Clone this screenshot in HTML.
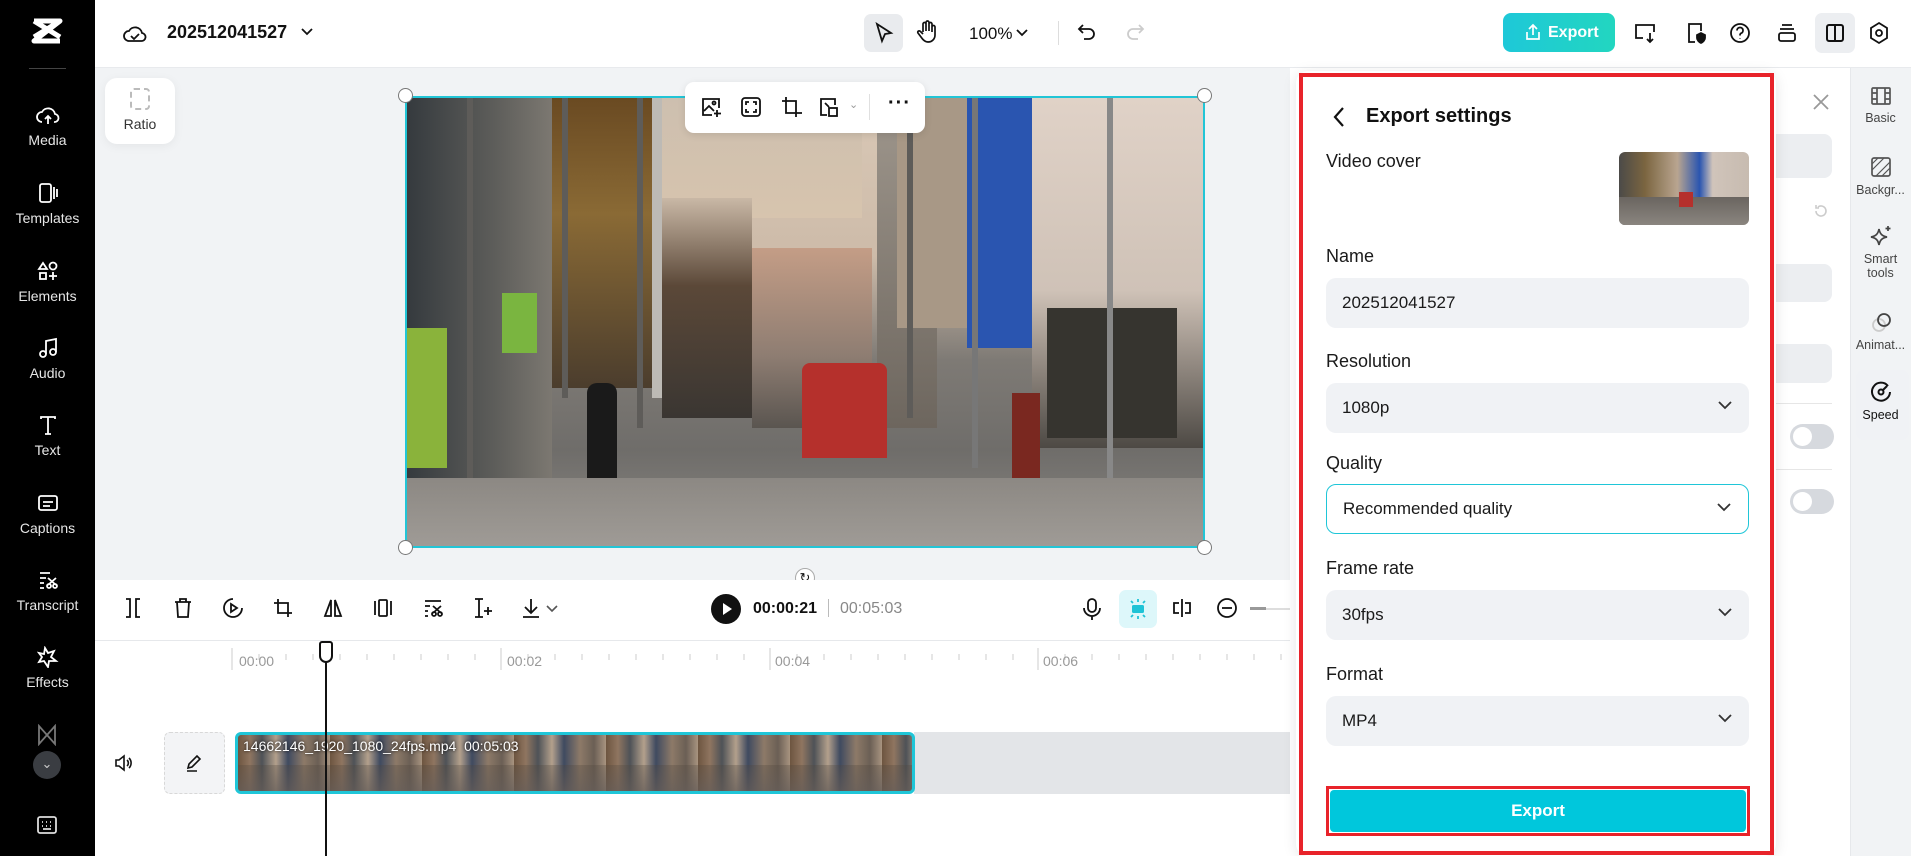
<!DOCTYPE html>
<html><head><meta charset="utf-8"><style>
*{box-sizing:border-box;margin:0;padding:0}
body{width:1911px;height:856px;overflow:hidden;position:relative;background:#f1f3f5;font-family:"Liberation Sans",sans-serif;color:#111}
.a{position:absolute}
.side{left:0;top:0;width:95px;height:856px;background:#000;color:#fff}
.si{position:absolute;left:0;width:95px;text-align:center;font-size:14px;color:#e6e6e6}
.si svg{display:block;margin:0 auto 6px}
.top{left:95px;top:0;width:1816px;height:68px;background:#fff;border-bottom:1px solid #e8eaed}
.lbl{font-size:18px;color:#1a1a1a}
.field{position:absolute;left:1326px;width:423px;height:50px;background:#f0f2f5;border-radius:10px;font-size:17px;padding:15px 16px;color:#1a1a1a}
.chev{position:absolute;right:16px;top:17px}
.ri{position:absolute;left:1850px;width:61px;text-align:center;font-size:12.5px;color:#444}
.ri svg{display:block;margin:0 auto 5px}
.pole{position:absolute;top:0;width:6px;background:#5e5c59}
</style></head><body>

<div class="a side">
 <svg class="a" style="left:30px;top:17px" width="34" height="32" viewBox="0 0 34 32"><path d="M4 4 L30 4 L4 24 L30 24 M4 4 L30 20 M30 4 L4 20" stroke="#fff" stroke-width="5" fill="none" stroke-linejoin="round"/></svg>
 <div class="a" style="left:29px;top:68px;width:37px;height:1px;background:#444"></div>
 <div class="si" style="top:104px"><svg width="24" height="22" viewBox="0 0 24 22" fill="none" stroke="#fff" stroke-width="1.8"><path d="M6 18a5 5 0 0 1 0-10 7 7 0 0 1 13 2 4 4 0 0 1-1 8"/><path d="M12 20v-8m-3 3 3-3 3 3"/></svg>Media</div>
 <div class="si" style="top:182px"><svg width="22" height="22" viewBox="0 0 22 22" fill="none" stroke="#fff" stroke-width="1.8"><rect x="3" y="2" width="11" height="18" rx="2"/><path d="M17 5v12M20 7v8"/></svg>Templates</div>
 <div class="si" style="top:260px"><svg width="22" height="22" viewBox="0 0 22 22" fill="none" stroke="#fff" stroke-width="1.8"><path d="M6 3l4 6H2z"/><circle cx="16" cy="6" r="3.5"/><rect x="3" y="13" width="6" height="6"/><path d="M16 12v8M12 16h8"/></svg>Elements</div>
 <div class="si" style="top:337px"><svg width="22" height="22" viewBox="0 0 22 22" fill="none" stroke="#fff" stroke-width="1.8"><circle cx="6" cy="17" r="3"/><circle cx="16" cy="15" r="3"/><path d="M9 17V4l10-2v13"/></svg>Audio</div>
 <div class="si" style="top:414px"><svg width="22" height="22" viewBox="0 0 22 22" fill="none" stroke="#fff" stroke-width="1.8"><path d="M4 5V3h14v2M11 3v17M8 20h6"/></svg>Text</div>
 <div class="si" style="top:492px"><svg width="22" height="22" viewBox="0 0 22 22" fill="none" stroke="#fff" stroke-width="1.8"><rect x="2" y="4" width="18" height="14" rx="2"/><path d="M6 10h10M6 14h7"/></svg>Captions</div>
 <div class="si" style="top:569px"><svg width="22" height="22" viewBox="0 0 22 22" fill="none" stroke="#fff" stroke-width="1.8"><path d="M3 4h10M3 9h6M3 14h4M3 19h4"/><circle cx="12" cy="17" r="2"/><circle cx="18" cy="17" r="2"/><path d="M11 9l8 7M19 9l-8 7"/></svg>Transcript</div>
 <div class="si" style="top:646px"><svg width="22" height="22" viewBox="0 0 22 22" fill="none" stroke="#fff" stroke-width="1.8"><path d="M8 2l3 5 6-2-3 6 5 4h-7l-1 6-4-6-5 1 3-5-3-4 5 1z"/></svg>Effects</div>
 <svg class="a" style="left:37px;top:724px" width="20" height="22" viewBox="0 0 20 22" fill="none" stroke="#777" stroke-width="1.8"><path d="M2 2v18l16-18v18z"/></svg>
 <div class="a" style="left:33px;top:751px;width:28px;height:28px;border-radius:50%;background:#3a3d42;color:#ccc;font-size:13px;text-align:center;line-height:26px">⌄</div>
 <svg class="a" style="left:36px;top:815px" width="22" height="20" viewBox="0 0 22 20" fill="none" stroke="#ddd" stroke-width="1.8"><rect x="2" y="2" width="18" height="16" rx="2"/><path d="M6 7h1M10 7h1M14 7h1M6 11h1M10 11h1M14 11h1M7 14h8"/></svg>
</div>

<div class="a top"></div>
<svg class="a" style="left:123px;top:22px" width="24" height="22" viewBox="0 0 24 22" fill="none" stroke="#111" stroke-width="1.8"><path d="M6 19a5 5 0 0 1 0-10 7 7 0 0 1 13 2 4 4 0 0 1-1 8z"/><path d="M8 14l3 3 5-5"/></svg>
<div class="a" style="left:167px;top:22px;font-size:18px;font-weight:bold">202512041527</div>
<svg class="a" style="left:300px;top:27px" width="14" height="10" viewBox="0 0 14 10"><path d="M2 2l5 5 5-5" stroke="#111" stroke-width="1.8" fill="none"/></svg>
<div class="a" style="left:864px;top:14px;width:39px;height:38px;background:#e9ebee;border-radius:7px"></div>
<svg class="a" style="left:874px;top:22px" width="20" height="22" viewBox="0 0 20 22" fill="none" stroke="#111" stroke-width="1.8"><path d="M3 2l14 9-6 1-3 7z"/></svg>
<svg class="a" style="left:916px;top:20px" width="22" height="24" viewBox="0 0 22 24" fill="none" stroke="#111" stroke-width="1.7"><path d="M7 12V4a1.5 1.5 0 0 1 3 0v7V2.5a1.5 1.5 0 0 1 3 0V11V4a1.5 1.5 0 0 1 3 0v8V7a1.5 1.5 0 0 1 3 0v8c0 4-3 7-7 7-3 0-5-2-7-5l-3-4c-1-1.5 1-3 2.5-1.5L7 14"/></svg>
<div class="a" style="left:969px;top:24px;font-size:17px">100%</div>
<svg class="a" style="left:1016px;top:28px" width="12" height="9" viewBox="0 0 12 9"><path d="M1 2l5 5 5-5" stroke="#111" stroke-width="1.8" fill="none"/></svg>
<div class="a" style="left:1058px;top:21px;width:1px;height:24px;background:#ddd"></div>
<svg class="a" style="left:1077px;top:22px" width="20" height="20" viewBox="0 0 20 20" fill="none" stroke="#111" stroke-width="1.8"><path d="M6 3L2 7l4 4M2 7h10a5 5 0 0 1 0 10H7"/></svg>
<svg class="a" style="left:1125px;top:22px" width="20" height="20" viewBox="0 0 20 20" fill="none" stroke="#ccc" stroke-width="1.8"><path d="M14 3l4 4-4 4M18 7H8a5 5 0 0 0 0 10h5"/></svg>
<div class="a" style="left:1503px;top:13px;width:112px;height:39px;border-radius:8px;background:linear-gradient(90deg,#1ec8d8,#22d6c0);color:#fff;font-weight:bold;font-size:16px;line-height:39px;padding-left:45px">Export</div>
<svg class="a" style="left:1525px;top:23px" width="16" height="18" viewBox="0 0 16 18" fill="none" stroke="#fff" stroke-width="1.7"><path d="M8 12V2M4 6l4-4 4 4M2 9v7h12V9"/></svg>
<svg class="a" style="left:1633px;top:22px" width="24" height="22" viewBox="0 0 24 22" fill="none" stroke="#111" stroke-width="1.8"><path d="M10 16H3V3h18v7M17 11v9M14 17l3 3 3-3"/></svg>
<svg class="a" style="left:1685px;top:21px" width="22" height="24" viewBox="0 0 22 24" fill="none" stroke="#111" stroke-width="1.8"><path d="M10 21H4V3h12v7"/><path d="M16 12l4 2v3c0 2-2 4-4 5-2-1-4-3-4-5v-3z" fill="#111"/></svg>
<svg class="a" style="left:1729px;top:22px" width="22" height="22" viewBox="0 0 22 22" fill="none" stroke="#111" stroke-width="1.8"><circle cx="11" cy="11" r="9"/><path d="M8 8.5a3 3 0 1 1 4 2.8c-1 .4-1 1-1 2.2M11 16v.5"/></svg>
<svg class="a" style="left:1776px;top:22px" width="22" height="22" viewBox="0 0 22 22" fill="none" stroke="#111" stroke-width="1.8"><path d="M6 3h10M4 7h14"/><rect x="3" y="11" width="16" height="8" rx="2"/></svg>
<div class="a" style="left:1815px;top:13px;width:40px;height:40px;background:#eceef1;border-radius:7px"></div>
<svg class="a" style="left:1824px;top:22px" width="22" height="22" viewBox="0 0 22 22" fill="none" stroke="#111" stroke-width="2"><rect x="3" y="3" width="16" height="16" rx="2"/><path d="M11 3v16"/></svg>
<svg class="a" style="left:1868px;top:21px" width="22" height="24" viewBox="0 0 22 24" fill="none" stroke="#111" stroke-width="1.8"><path d="M11 2l8 5v10l-8 5-8-5V7z"/><circle cx="11" cy="12" r="3"/></svg>

<div class="a" style="left:105px;top:78px;width:70px;height:66px;background:#fff;border-radius:12px;box-shadow:0 2px 10px rgba(0,0,0,.06);text-align:center;font-size:14px;color:#333;padding-top:10px">
 <div style="width:20px;height:22px;border:2px dashed #bbb;border-radius:4px;margin:0 auto 6px"></div>Ratio</div>

<!-- video -->
<div class="a" style="left:405px;top:96px;width:800px;height:452px;border:2px solid #22c5d6;overflow:hidden;background:#8a8379">
 <div class="a" style="left:0;top:0;width:800px;height:452px;background:linear-gradient(180deg,#d9c8b6 0%,#cdbba9 35%,#7e7a75 58%,#6f6d6a 78%,#8a8783 100%)"></div>
 <div class="a" style="left:0;top:0;width:145px;height:390px;background:linear-gradient(90deg,#353a3e,#5d5d5a 60%,#7c7871)"></div>
 <div class="a" style="left:0;top:230px;width:40px;height:140px;background:#8ab33b"></div>
 <div class="a" style="left:95px;top:195px;width:35px;height:60px;background:#7ab540"></div>
 <div class="a" style="left:145px;top:0;width:100px;height:290px;background:linear-gradient(180deg,#6a4a22,#8a6a35 40%,#4b3d2d)"></div>
 <div class="a" style="left:245px;top:0;width:30px;height:300px;background:#bdbab5"></div>
 <div class="a" style="left:255px;top:0;width:200px;height:120px;background:linear-gradient(180deg,#cdbfaf,#d7c4ae)"></div>
 <div class="a" style="left:255px;top:100px;width:90px;height:220px;background:linear-gradient(180deg,#c9b8a6,#5b4838 40%,#3a3632)"></div>
 <div class="a" style="left:345px;top:150px;width:120px;height:180px;background:linear-gradient(180deg,#c49d86,#8e7d72 60%,#5a5550)"></div>
 <div class="a" style="left:470px;top:0;width:60px;height:330px;background:linear-gradient(180deg,#9f978d,#6d665e)"></div>
 <div class="a" style="left:490px;top:0;width:90px;height:230px;background:#a89886"></div>
 <div class="a" style="left:560px;top:0;width:65px;height:250px;background:#2a55b0"></div>
 <div class="a" style="left:625px;top:0;width:175px;height:350px;background:linear-gradient(180deg,#e0d2c7,#cfc2b7 55%,#4d4944)"></div>
 <div class="a" style="left:640px;top:210px;width:130px;height:130px;background:#36342f"></div>
 <div class="pole" style="left:60px;height:420px"></div>
 <div class="pole" style="left:155px;height:300px"></div>
 <div class="pole" style="left:230px;height:330px"></div>
 <div class="pole" style="left:500px;height:320px"></div>
 <div class="pole" style="left:565px;height:370px;background:#777"></div>
 <div class="pole" style="left:700px;height:380px;background:#888"></div>
 <div class="a" style="left:395px;top:265px;width:85px;height:95px;background:#b5302c;border-radius:8px 8px 0 0"></div>
 <div class="a" style="left:180px;top:285px;width:30px;height:120px;background:#1a1a1a;border-radius:10px 10px 0 0"></div>
 <div class="a" style="left:605px;top:295px;width:28px;height:90px;background:#7a2820"></div>
 <div class="a" style="left:0;top:380px;width:800px;height:72px;background:linear-gradient(180deg,#8c8883,#a09c97)"></div>
</div>
<div class="a" style="left:398px;top:88px;width:15px;height:15px;border-radius:50%;background:#fff;border:1px solid #777"></div>
<div class="a" style="left:1197px;top:88px;width:15px;height:15px;border-radius:50%;background:#fff;border:1px solid #777"></div>
<div class="a" style="left:398px;top:540px;width:15px;height:15px;border-radius:50%;background:#fff;border:1px solid #777"></div>
<div class="a" style="left:1197px;top:540px;width:15px;height:15px;border-radius:50%;background:#fff;border:1px solid #777"></div>
<div class="a" style="left:795px;top:568px;width:20px;height:20px;border-radius:50%;background:#fff;border:1px solid #aaa;font-size:13px;text-align:center;line-height:17px">↻</div>

<div class="a" style="left:685px;top:82px;width:240px;height:51px;background:#fff;border-radius:9px;box-shadow:0 2px 8px rgba(0,0,0,.1)"></div>
<svg class="a" style="left:700px;top:96px" width="22" height="22" viewBox="0 0 22 22" fill="none" stroke="#111" stroke-width="1.8"><path d="M12 19H3V3h16v9"/><path d="M4 15l5-5 5 5"/><circle cx="14" cy="7" r="1.5"/><path d="M17 14v7M14 17.5h7"/></svg>
<svg class="a" style="left:740px;top:96px" width="22" height="22" viewBox="0 0 22 22" fill="none" stroke="#111" stroke-width="1.8"><rect x="2" y="2" width="18" height="18" rx="3"/><path d="M6 9V6h3M13 6h3v3M16 13v3h-3M9 16H6v-3"/></svg>
<svg class="a" style="left:780px;top:95px" width="22" height="24" viewBox="0 0 22 24" fill="none" stroke="#111" stroke-width="1.8"><path d="M6 2v16h16M2 6h14v16"/></svg>
<svg class="a" style="left:818px;top:96px" width="22" height="22" viewBox="0 0 22 22" fill="none" stroke="#111" stroke-width="1.8"><path d="M9 19H3V3h14v6"/><rect x="11" y="12" width="8" height="8"/><path d="M7 7l4 4"/></svg>
<div class="a" style="left:849px;top:98px;font-size:11px;color:#999">⌄</div>
<div class="a" style="left:869px;top:94px;width:1px;height:26px;background:#e0e0e0"></div>
<div class="a" style="left:888px;top:92px;font-size:20px;font-weight:bold;letter-spacing:1px">···</div>

<div class="a" style="left:95px;top:580px;width:1205px;height:276px;background:#fff"></div>
<div class="a" style="left:95px;top:640px;width:1205px;height:1px;background:#e6e8eb"></div>
<svg class="a" style="left:122px;top:597px" width="22" height="22" viewBox="0 0 22 22" fill="none" stroke="#111" stroke-width="1.8"><path d="M4 2h4v18H4M18 2h-4v18h4"/></svg>
<svg class="a" style="left:172px;top:597px" width="22" height="22" viewBox="0 0 22 22" fill="none" stroke="#111" stroke-width="1.8"><path d="M3 5h16M8 5V2h6v3M5 5l1 15h10l1-15"/></svg>
<svg class="a" style="left:222px;top:597px" width="22" height="22" viewBox="0 0 22 22" fill="none" stroke="#111" stroke-width="1.8"><path d="M11 2a9 9 0 1 0 9 9"/><path d="M9 7l6 4-6 4z"/></svg>
<svg class="a" style="left:272px;top:597px" width="22" height="22" viewBox="0 0 22 22" fill="none" stroke="#111" stroke-width="1.8"><path d="M6 2v14h14M2 6h14v14"/></svg>
<svg class="a" style="left:322px;top:597px" width="22" height="22" viewBox="0 0 22 22" fill="none" stroke="#111" stroke-width="1.8"><path d="M9 3L3 19h6zM13 3l6 16h-6z"/></svg>
<svg class="a" style="left:372px;top:597px" width="22" height="22" viewBox="0 0 22 22" fill="none" stroke="#111" stroke-width="1.8"><rect x="7" y="3" width="8" height="16" rx="1"/><path d="M3 4v14M19 4v14"/></svg>
<svg class="a" style="left:422px;top:597px" width="22" height="22" viewBox="0 0 22 22" fill="none" stroke="#111" stroke-width="1.8"><path d="M3 4h16M3 9h5M3 14h3M3 19h3"/><circle cx="12" cy="17" r="2"/><circle cx="18" cy="17" r="2"/><path d="M11 9l8 7M19 9l-8 7"/></svg>
<svg class="a" style="left:472px;top:597px" width="22" height="22" viewBox="0 0 22 22" fill="none" stroke="#111" stroke-width="1.8"><path d="M3 2h4v18H3M11 2h-4M11 20H7M16 10v8M12 14h8"/></svg>
<svg class="a" style="left:520px;top:597px" width="22" height="22" viewBox="0 0 22 22" fill="none" stroke="#111" stroke-width="1.8"><path d="M11 2v13M5 10l6 6 6-6M3 20h16"/></svg>
<svg class="a" style="left:546px;top:604px" width="12" height="9" viewBox="0 0 12 9"><path d="M1 2l5 5 5-5" stroke="#555" stroke-width="1.6" fill="none"/></svg>
<div class="a" style="left:711px;top:594px;width:30px;height:30px;border-radius:50%;background:#111"></div>
<svg class="a" style="left:722px;top:602px" width="11" height="14" viewBox="0 0 11 14"><path d="M1 1l9 6-9 6z" fill="#fff"/></svg>
<div class="a" style="left:753px;top:600px;font-size:16px;font-weight:bold">00:00:21</div>
<div class="a" style="left:828px;top:599px;width:1px;height:18px;background:#bbb"></div>
<div class="a" style="left:840px;top:600px;font-size:16px;color:#888">00:05:03</div>
<svg class="a" style="left:1081px;top:597px" width="22" height="24" viewBox="0 0 22 24" fill="none" stroke="#111" stroke-width="1.8"><rect x="7" y="2" width="8" height="13" rx="4"/><path d="M3 11a8 8 0 0 0 16 0M11 19v4"/></svg>
<div class="a" style="left:1119px;top:590px;width:38px;height:38px;background:#ddf7fa;border-radius:7px"></div>
<svg class="a" style="left:1126px;top:597px" width="24" height="24" viewBox="0 0 24 24"><rect x="6" y="8" width="12" height="8" rx="1.5" fill="#1fc3d6"/><path d="M12 2v3M12 19v3M5 4l2 2M19 4l-2 2M5 20l2-2M19 20l-2-2" stroke="#1fc3d6" stroke-width="1.8"/></svg>
<svg class="a" style="left:1171px;top:597px" width="22" height="22" viewBox="0 0 22 22" fill="none" stroke="#111" stroke-width="1.8"><path d="M11 2v18M8 6H3v10h5M14 6h5v10h-5"/></svg>
<svg class="a" style="left:1216px;top:597px" width="22" height="22" viewBox="0 0 22 22" fill="none" stroke="#111" stroke-width="1.8"><circle cx="11" cy="11" r="9"/><path d="M6 11h10"/></svg>
<div class="a" style="left:1250px;top:608px;width:50px;height:2px;background:#ddd"></div>
<div class="a" style="left:1250px;top:607px;width:16px;height:3px;background:#999"></div>

<svg class="a" style="left:95px;top:640px" width="1205" height="30"><g stroke="#ccc" stroke-width="1">
<path d="M137 8v22M406 8v22M675 8v22M943 8v22"/>
<path d="M164 14v6M191 14v6M218 14v6M245 14v6M272 14v6M299 14v6M326 14v6M353 14v6M380 14v6M433 14v6M460 14v6M487 14v6M514 14v6M541 14v6M568 14v6M595 14v6M622 14v6M649 14v6M702 14v6M729 14v6M756 14v6M783 14v6M810 14v6M837 14v6M864 14v6M891 14v6M918 14v6M970 14v6M997 14v6M1024 14v6M1051 14v6M1078 14v6M1105 14v6M1132 14v6M1159 14v6M1186 14v6"/></g></svg>
<div class="a" style="left:239px;top:653px;font-size:14px;color:#999">00:00</div>
<div class="a" style="left:507px;top:653px;font-size:14px;color:#999">00:02</div>
<div class="a" style="left:775px;top:653px;font-size:14px;color:#999">00:04</div>
<div class="a" style="left:1043px;top:653px;font-size:14px;color:#999">00:06</div>

<svg class="a" style="left:113px;top:753px" width="20" height="20" viewBox="0 0 20 20" fill="none" stroke="#111" stroke-width="1.6"><path d="M3 7h3l5-4v14l-5-4H3z"/><path d="M14 7a4 4 0 0 1 0 6M16 5a7 7 0 0 1 0 10"/></svg>
<div class="a" style="left:164px;top:732px;width:61px;height:62px;background:#f3f4f6;border:1px dashed #d8d8d8;border-radius:6px"></div>
<svg class="a" style="left:184px;top:753px" width="20" height="20" viewBox="0 0 20 20" fill="none" stroke="#111" stroke-width="1.6"><path d="M4 15l1-4 8-8 3 3-8 8zM3 18h10"/></svg>
<div class="a" style="left:914px;top:732px;width:386px;height:62px;background:#e3e5e8"></div>
<div class="a" style="left:235px;top:732px;width:680px;height:62px;border:3px solid #1fc6d8;border-radius:6px;background:repeating-linear-gradient(90deg,#6d5540 0px,#8f7560 12px,#4e5257 24px,#b3a08c 38px,#3f4a60 50px,#8d7a68 66px,#6b5f55 80px,#a89480 92px);overflow:hidden">
 <div class="a" style="left:0;top:30px;width:680px;height:30px;background:linear-gradient(180deg,rgba(80,70,60,.3),rgba(100,92,88,.8))"></div>
 <div class="a" style="left:5px;top:3px;font-size:14px;color:#fff;text-shadow:0 0 3px #000">14662146_1920_1080_24fps.mp4 &nbsp;00:05:03</div>
</div>
<div class="a" style="left:325px;top:642px;width:2px;height:214px;background:#111"></div>
<div class="a" style="left:319px;top:641px;width:14px;height:22px;background:#fff;border:2px solid #111;border-radius:3px 3px 7px 7px"></div>

<div class="a" style="left:1290px;top:68px;width:560px;height:788px;background:#fff"></div>
<div class="a" style="left:1850px;top:68px;width:1px;height:788px;background:#e6e8eb"></div>
<svg class="a" style="left:1812px;top:93px" width="18" height="18" viewBox="0 0 18 18"><path d="M2 2l14 14M16 2L2 16" stroke="#999" stroke-width="1.8"/></svg>
<div class="a" style="left:1760px;top:134px;width:72px;height:44px;background:#eceef1;border-radius:8px"></div>
<svg class="a" style="left:1813px;top:203px" width="16" height="16" viewBox="0 0 16 16" fill="none" stroke="#ccc" stroke-width="1.6"><path d="M3 8a5 5 0 1 0 2-4M3 2v3h3"/></svg>
<div class="a" style="left:1760px;top:264px;width:72px;height:38px;background:#eceef1;border-radius:8px"></div>
<div class="a" style="left:1760px;top:344px;width:72px;height:39px;background:#eceef1;border-radius:8px"></div>
<div class="a" style="left:1760px;top:403px;width:72px;height:1px;background:#e6e6e6"></div>
<div class="a" style="left:1760px;top:469px;width:72px;height:1px;background:#e6e6e6"></div>
<div class="a" style="left:1790px;top:424px;width:44px;height:25px;border-radius:13px;background:#d6d9de"><div style="width:19px;height:19px;border-radius:50%;background:#fff;margin:3px"></div></div>
<div class="a" style="left:1790px;top:489px;width:44px;height:25px;border-radius:13px;background:#d6d9de"><div style="width:19px;height:19px;border-radius:50%;background:#fff;margin:3px"></div></div>

<div class="ri" style="top:86px"><svg width="22" height="20" viewBox="0 0 22 20" fill="none" stroke="#555" stroke-width="1.7"><rect x="2" y="2" width="18" height="16" rx="1"/><path d="M7 2v16M15 2v16M2 7h5M2 13h5M15 7h5M15 13h5"/></svg>Basic</div>
<div class="ri" style="top:156px"><svg width="22" height="22" viewBox="0 0 22 22" fill="none" stroke="#555" stroke-width="1.7"><rect x="2" y="2" width="18" height="18" rx="2"/><path d="M2 14L14 2M6 20L20 6M2 8l6-6M12 20l8-8" stroke-width="1.2"/></svg>Backgr...</div>
<div class="ri" style="top:225px"><svg width="22" height="22" viewBox="0 0 22 22" fill="none" stroke="#444" stroke-width="1.7"><path d="M9 4c1 5 3 7 8 8-5 1-7 3-8 8-1-5-3-7-8-8 5-1 7-3 8-8zM18 1v5M15.5 3.5h5"/></svg>Smart<br>tools</div>
<div class="ri" style="top:311px"><svg width="22" height="22" viewBox="0 0 22 22" fill="none" stroke-width="1.8"><circle cx="9" cy="14" r="6" stroke="#ccc"/><circle cx="14" cy="9" r="6" stroke="#444"/></svg>Animat...</div>
<div class="a" style="left:1856px;top:370px;width:53px;height:70px;background:#f0f2f5;border-radius:8px"></div>
<div class="ri" style="top:381px;color:#111"><svg width="22" height="22" viewBox="0 0 22 22" fill="none" stroke="#111" stroke-width="2"><path d="M18 5a9 9 0 1 0 2 6"/><circle cx="11" cy="11" r="2.5"/><path d="M12.5 9.5L17 5"/></svg>Speed</div>

<div class="a" style="left:1296px;top:71px;width:480px;height:785px;background:#fff;border-radius:12px;box-shadow:0 2px 14px rgba(0,0,0,.1)"></div>
<div class="a" style="left:1299px;top:73px;width:475px;height:782px;border:4px solid #e8232a"></div>
<svg class="a" style="left:1332px;top:106px" width="14" height="22" viewBox="0 0 14 22"><path d="M11 2L3 11l8 9" stroke="#111" stroke-width="2.2" fill="none"/></svg>
<div class="a" style="left:1366px;top:105px;font-size:20px;font-weight:bold">Export settings</div>
<div class="a lbl" style="left:1326px;top:151px">Video cover</div>
<div class="a" style="left:1619px;top:152px;width:130px;height:73px;border-radius:6px;overflow:hidden;background:linear-gradient(90deg,#4b4a48 0%,#7b6540 20%,#b9a590 45%,#2a55b0 62%,#d0c4ba 72%,#c7bbb0 100%)">
 <div class="a" style="left:0;top:45px;width:130px;height:28px;background:linear-gradient(180deg,#6a6560,#8a857f)"></div>
 <div class="a" style="left:60px;top:40px;width:14px;height:15px;background:#b5302c"></div></div>
<div class="a lbl" style="left:1326px;top:246px">Name</div>
<div class="field" style="top:278px;height:50px">202512041527</div>
<div class="a lbl" style="left:1326px;top:351px">Resolution</div>
<div class="field" style="top:383px">1080p<svg class="chev" width="16" height="10" viewBox="0 0 16 10"><path d="M2 2l6 6 6-6" stroke="#333" stroke-width="1.8" fill="none"/></svg></div>
<div class="a lbl" style="left:1326px;top:453px">Quality</div>
<div class="field" style="top:484px;background:#fff;border:1.5px solid #1fc6d8;padding-top:14px">Recommended quality<svg class="chev" width="16" height="10" viewBox="0 0 16 10"><path d="M2 2l6 6 6-6" stroke="#333" stroke-width="1.8" fill="none"/></svg></div>
<div class="a lbl" style="left:1326px;top:558px">Frame rate</div>
<div class="field" style="top:590px">30fps<svg class="chev" width="16" height="10" viewBox="0 0 16 10"><path d="M2 2l6 6 6-6" stroke="#333" stroke-width="1.8" fill="none"/></svg></div>
<div class="a lbl" style="left:1326px;top:664px">Format</div>
<div class="field" style="top:696px">MP4<svg class="chev" width="16" height="10" viewBox="0 0 16 10"><path d="M2 2l6 6 6-6" stroke="#333" stroke-width="1.8" fill="none"/></svg></div>
<div class="a" style="left:1326px;top:786px;width:424px;height:50px;border:3px solid #e8232a"></div>
<div class="a" style="left:1330px;top:790px;width:416px;height:42px;background:#00c7dc;border-radius:4px;color:#fff;font-weight:bold;font-size:17px;text-align:center;line-height:42px">Export</div>
</body></html>
